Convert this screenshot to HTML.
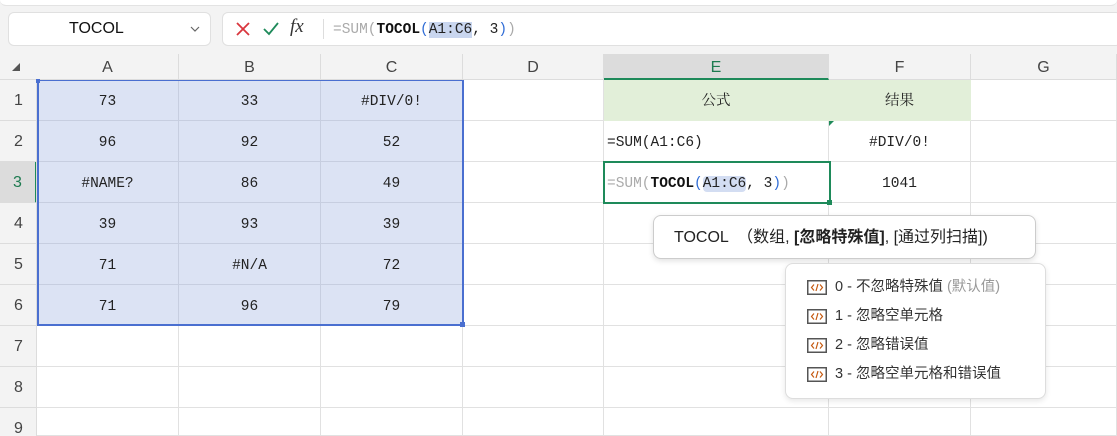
<!DOCTYPE html>
<html><head><meta charset="utf-8"><style>
*{margin:0;padding:0;box-sizing:border-box}
html,body{width:1117px;height:436px;overflow:hidden}
body{background:#f3f3f3;position:relative;font-family:"Liberation Sans","Noto Sans CJK SC",sans-serif}
.a{position:absolute}
.hd{position:absolute;top:54px;height:26px;border-right:1px solid #dcdcdc;font-size:16px;color:#444;text-align:center;line-height:27px}
.rh{position:absolute;left:0;width:37px;height:41px;border-bottom:1px solid #dcdcdc;font-size:16px;color:#444;text-align:center;line-height:41px}
.c{position:absolute;height:41px;border-right:1px solid #e1e1e1;border-bottom:1px solid #e1e1e1;font-family:"Liberation Mono","Noto Serif CJK SC",monospace;font-size:14.5px;text-align:center;line-height:45px;color:#222;overflow:hidden}
.sel{background:#dce3f4;border-color:#c7cee0}
.it{font-size:14.5px;color:#333;height:29px;line-height:29px;display:flex;align-items:center}
.it svg{margin-right:8px}
.mono{font-family:"Liberation Mono","Noto Serif CJK SC",monospace}
</style></head><body>
<div class="a" style="left:0;top:0;width:1117px;height:6px;background:#fff;border-bottom:1px solid #e3e3e3;border-radius:0 0 8px 8px"></div>
<div class="a" style="left:8px;top:12px;width:203px;height:34px;background:#fff;border:1px solid #e0e0e0;border-radius:6px;font-size:16px;line-height:32px;padding-left:60px;color:#111">TOCOL<svg style="position:absolute;right:10px;top:13px" width="10" height="6"><path d="M1 1L5 5L9 1" fill="none" stroke="#666" stroke-width="1.2"/></svg></div>
<div class="a" style="left:222px;top:12px;width:900px;height:34px;background:#fff;border:1px solid #e0e0e0;border-radius:6px"></div>
<svg class="a" style="left:236px;top:22px" width="14" height="14"><path d="M1 1L13 13M13 1L1 13" stroke="#d9363e" stroke-width="1.8"/></svg>
<svg class="a" style="left:263px;top:22px" width="16" height="14"><path d="M1 7L6 12L15 1" fill="none" stroke="#1e8a5a" stroke-width="1.8"/></svg>
<div class="a" style="left:290px;top:16px;font-size:19px;font-style:italic;font-family:'Liberation Serif',serif;color:#333">fx</div>
<div class="a" style="left:323px;top:19px;width:1px;height:20px;background:#ddd"></div>
<div class="a mono" style="left:333px;top:19px;font-size:14.5px;color:#aaa;line-height:22px;white-space:pre">=SUM(<b style="color:#111">TOCOL</b><span style="color:#2f6cd6">(</span><span style="background:#c9d6ef;color:#222">A1:C6</span><span style="color:#222">, 3</span><span style="color:#2f6cd6">)</span>)</div>
<div class="a" style="left:37px;top:80px;width:1080px;height:356px;background:#fff"></div>
<div class="a" style="left:0;top:54px;width:1117px;height:26px;background:#f3f3f3;border-bottom:1px solid #dcdcdc"></div>
<div class="a" style="left:12px;top:63px;width:0;height:0;border-left:8px solid transparent;border-bottom:8px solid #555"></div>
<div class="hd" style="left:37px;width:142px">A</div>
<div class="hd" style="left:179px;width:142px">B</div>
<div class="hd" style="left:321px;width:142px">C</div>
<div class="hd" style="left:463px;width:141px">D</div>
<div class="hd" style="left:604px;width:225px;background:#dcdcdc;color:#1e7b50;border-bottom:2px solid #1e8a5a">E</div>
<div class="hd" style="left:829px;width:142px">F</div>
<div class="hd" style="left:971px;width:146px">G</div>
<div class="rh" style="top:80px">1</div><div class="rh" style="top:121px">2</div>
<div class="rh" style="top:162px;background:#dcdcdc;color:#1e7b50;border-right:2px solid #1e8a5a">3</div>
<div class="rh" style="top:203px">4</div><div class="rh" style="top:244px">5</div><div class="rh" style="top:285px">6</div><div class="rh" style="top:326px">7</div><div class="rh" style="top:367px">8</div><div class="rh" style="top:408px">9</div>
<div class="a" style="left:36px;top:80px;width:1px;height:356px;background:#dcdcdc"></div>
<div id="g"></div>
<script>
var d=[["73","33","#DIV/0!"],["96","92","52"],["#NAME?","86","49"],["39","93","39"],["71","#N/A","72"],["71","96","79"]];
var xs=[37,179,321,463,604,829,971,1117],h='';
for(var r=0;r<9;r++){for(var c=0;c<7;c++){var y=80+r*41,cls='c',t='',st='';
if(r==8)st='height:28px;';
if(r<6&&c<3){cls+=' sel';t=d[r][c];}
if(r==0&&(c==4||c==5)){st='background:#e2efd9;border-color:#e2efd9;font-family:"Noto Serif CJK SC",serif;font-size:17px;line-height:43px;';t=c==4?'公式':'结果';}
if(r==1&&c==4){t='=SUM(A1:C6)';st+='text-align:left;padding-left:3px;';}
if(r==1&&c==5)t='#DIV/0!';
if(r==2&&c==5)t='1041';
h+='<div class="'+cls+'" style="left:'+xs[c]+'px;top:'+y+'px;width:'+(xs[c+1]-xs[c])+'px;'+st+'">'+t+'</div>';}}
document.getElementById('g').innerHTML=h;
</script>
<div class="a" style="left:37px;top:80px;width:427px;height:246px;border:2px solid #4a6fd0;border-top-width:1px"></div>
<div class="a" style="left:36px;top:79px;width:4px;height:4px;background:#4a6fd0"></div>
<div class="a" style="left:460px;top:322px;width:5px;height:5px;background:#4a6fd0"></div>
<div class="a" style="left:829px;top:121px;width:0;height:0;border-right:5px solid transparent;border-top:5px solid #1e8a5a"></div>
<div class="a mono" style="left:603px;top:161px;width:228px;height:43px;border:2px solid #1e8a5a;background:#fff;font-size:14.5px;line-height:43px;padding-left:2px;color:#aaa;white-space:pre">=SUM(<b style="color:#111">TOCOL</b><span style="color:#2f6cd6">(</span><span style="background:#d3ddf2;color:#222;border-radius:4px">A1:C6</span><span style="color:#222">, 3</span><span style="color:#2f6cd6">)</span>)</div>
<div class="a" style="left:827px;top:200px;width:5px;height:5px;background:#1e8a5a"></div>
<div class="a" style="left:653px;top:215px;width:383px;height:44px;background:#fff;border:1px solid #ccc;border-radius:8px;box-shadow:0 2px 6px rgba(0,0,0,.12);font-size:16px;line-height:44px;padding-left:20px;color:#222;white-space:nowrap">TOCOL &nbsp;（数组, <b>[忽略特殊值]</b>, [通过列扫描])</div>
<div class="a" style="left:785px;top:263px;width:261px;height:136px;background:#fff;border:1px solid #ddd;border-radius:8px;box-shadow:0 2px 6px rgba(0,0,0,.1);padding:9px 0 0 21px">
<div class="it"><svg width="20" height="15"><rect x="0.75" y="0.75" width="18.5" height="13.5" fill="#fff" stroke="#555" stroke-width="1.5"/><path d="M7 4.5L4.5 7.5L7 10.5M13 4.5L15.5 7.5L13 10.5M11 4L9 11" fill="none" stroke="#c55a11" stroke-width="1.2"/></svg>0 - 不忽略特殊值 <span style="color:#999">&nbsp;(默认值)</span></div>
<div class="it"><svg width="20" height="15"><rect x="0.75" y="0.75" width="18.5" height="13.5" fill="#fff" stroke="#555" stroke-width="1.5"/><path d="M7 4.5L4.5 7.5L7 10.5M13 4.5L15.5 7.5L13 10.5M11 4L9 11" fill="none" stroke="#c55a11" stroke-width="1.2"/></svg>1 - 忽略空单元格</div>
<div class="it"><svg width="20" height="15"><rect x="0.75" y="0.75" width="18.5" height="13.5" fill="#fff" stroke="#555" stroke-width="1.5"/><path d="M7 4.5L4.5 7.5L7 10.5M13 4.5L15.5 7.5L13 10.5M11 4L9 11" fill="none" stroke="#c55a11" stroke-width="1.2"/></svg>2 - 忽略错误值</div>
<div class="it"><svg width="20" height="15"><rect x="0.75" y="0.75" width="18.5" height="13.5" fill="#fff" stroke="#555" stroke-width="1.5"/><path d="M7 4.5L4.5 7.5L7 10.5M13 4.5L15.5 7.5L13 10.5M11 4L9 11" fill="none" stroke="#c55a11" stroke-width="1.2"/></svg>3 - 忽略空单元格和错误值</div>
</div>
</body></html>
